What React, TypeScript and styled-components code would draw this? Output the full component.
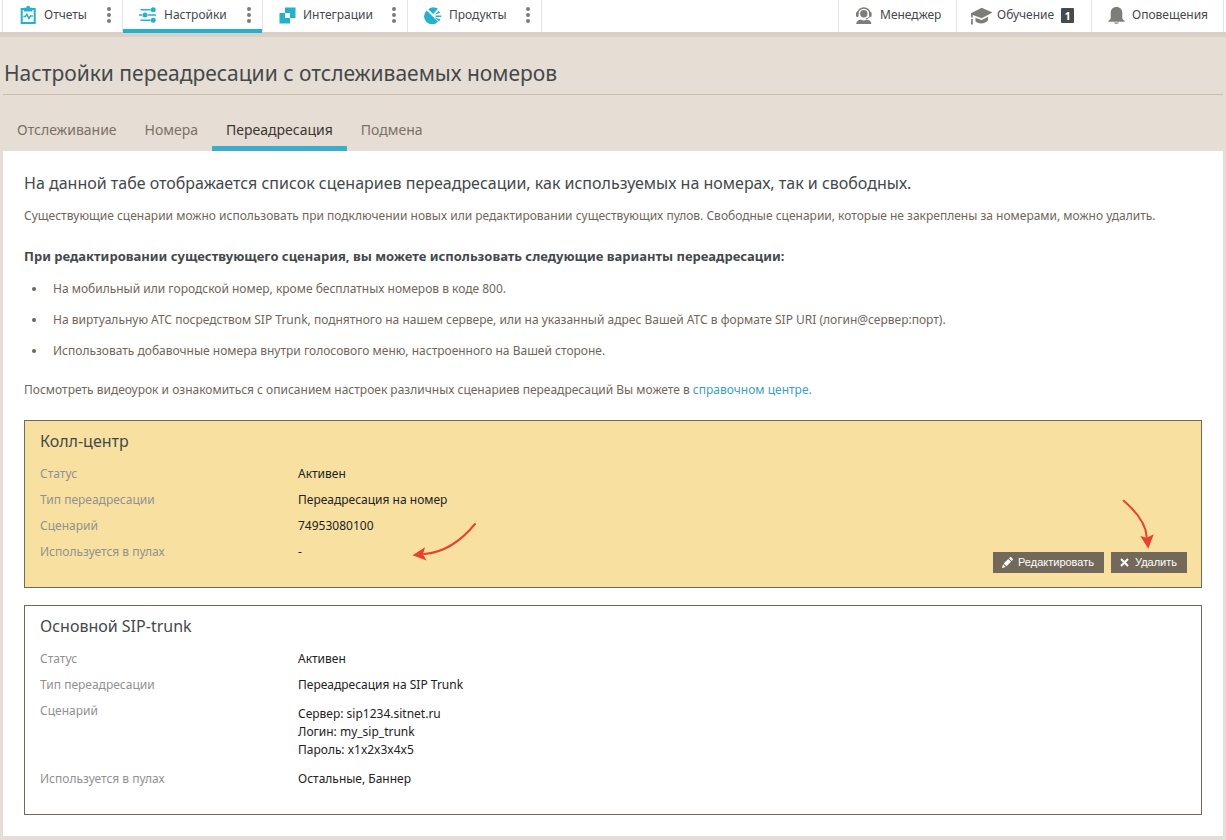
import React from 'react';
import styled, { createGlobalStyle, css } from 'styled-components';

const Global = createGlobalStyle`
  *, *::before, *::after { box-sizing: border-box; }
  body {
    margin: 0;
    background: #e6ddd4;
    color: #43494b;
    font-family: "Noto Sans", "Open Sans", sans-serif;
    font-size: 12px;
  }
  h1, h2, h3, p, ul, dl, dd { margin: 0; padding: 0; font-weight: 400; }
`;

const TopBar = styled.header`
  display: flex;
  justify-content: space-between;
  height: 37px;
  padding: 0 2px;
  background: #fff;
  border-bottom: 5px solid #d9d0c7;
`;

const NavGroup = styled.nav`
  display: flex;
  border-left: 1px solid #e4e4e4;
`;

const NavItem = styled.div<{ $width: number; $active?: boolean; $tight?: boolean }>`
  position: relative;
  display: flex;
  align-items: center;
  width: ${(p) => p.$width}px;
  height: 32px;
  padding: 0 7px 2px ${(p) => (p.$tight ? 14 : 16)}px;
  border-right: 1px solid #e4e4e4;
  ${(p) =>
    p.$active &&
    css`
      &::after {
        content: '';
        position: absolute;
        left: 0;
        right: 0;
        bottom: -1px;
        height: 4px;
        background: #23b1cd;
      }
    `}
`;

const NavLink = styled.a`
  display: flex;
  flex: 1;
  align-items: center;
  gap: 7px;
  color: #43494b;
  font-size: 12px;
  line-height: 18px;
  white-space: nowrap;
  text-decoration: none;
`;

const MenuButton = styled.button`
  width: 12px;
  height: 20px;
  padding: 0;
  border: 0;
  background: none;
  color: #7b7b79;
`;

const Badge = styled.span`
  width: 13px;
  height: 15px;
  border-radius: 1px;
  background: #434b4d;
  color: #fff;
  font-size: 11px;
  font-weight: 700;
  line-height: 15px;
  text-align: center;
`;

const Icon = styled.svg`
  display: block;
  flex: none;
  overflow: visible;
`;

const Page = styled.main`
  padding: 0 3px 4px;
`;

const PageTitle = styled.h1`
  padding: 22px 1px 7px;
  border-bottom: 1px solid #c9bda9;
  font-size: 21px;
  line-height: 28px;
`;

const Tabs = styled.nav`
  display: flex;
  padding-top: 16px;
`;

const Tab = styled.a<{ $active?: boolean }>`
  height: 40px;
  padding: 0 14px;
  border-bottom: 5px solid ${(p) => (p.$active ? '#3daccd' : 'transparent')};
  color: ${(p) => (p.$active ? '#3b3630' : '#7b7166')};
  font-size: 14px;
  line-height: 38px;
  text-decoration: none;
`;

const Panel = styled.section`
  padding: 20px 21px 21px;
  background: #fff;
`;

const Lead = styled.h2`
  font-size: 16px;
  line-height: 24px;
`;

const Text = styled.p`
  color: #706659;
  font-size: 12px;
  line-height: 20px;
`;

const Intro = styled.div`
  padding-bottom: 20px;
  ${Lead} { margin-bottom: 11px; }
`;

const SubTitle = styled.h3`
  margin: 19px 0 12px;
  font-size: 13px;
  font-weight: 700;
  line-height: 22px;
`;

const Options = styled.ul`
  display: grid;
  gap: 11px;
  margin-bottom: 19px;
  color: #706659;
  font-size: 12px;
  line-height: 20px;
  list-style: none;
`;

const Option = styled.li`
  display: flex;
  align-items: center;
  gap: 17px;
  padding-left: 8px;

  &::before {
    content: '';
    flex: none;
    width: 4px;
    height: 4px;
    border-radius: 50%;
    background: currentColor;
  }
`;

const HelpLink = styled.a`
  color: #3a9fc4;
  text-decoration: none;
`;

const Cards = styled.div`
  display: grid;
  gap: 17px;
`;

const Card = styled.article<{ $highlight?: boolean }>`
  position: relative;
  display: flex;
  padding: 10px 14px 14px 15px;
  border: 1px solid #73695b;
  background: ${(p) => (p.$highlight ? '#f8e1a0' : '#fff')};
`;

const CardBody = styled.div`
  flex: 1;
`;

const CardTitle = styled.h2`
  margin-bottom: 10px;
  font-size: 16px;
  line-height: 20px;
`;

const Details = styled.dl`
  margin-bottom: 8px;
`;

const Row = styled.div`
  display: grid;
  grid-template-columns: 258px 1fr;
  line-height: 26px;
`;

const Label = styled.dt`
  color: #919191;
`;

const Value = styled.dd<{ $multi?: boolean }>`
  color: #222;
  ${(p) =>
    p.$multi &&
    css`
      padding: 7px 0;
      line-height: 18px;
    `}
`;

const Actions = styled.div`
  display: flex;
  align-self: flex-end;
  gap: 7px;
`;

const ActionButton = styled.button`
  display: flex;
  align-items: center;
  gap: 5px;
  height: 21px;
  padding: 0 10px 0 9px;
  border: 0;
  background: #73695b;
  color: #fff;
  font-family: "Liberation Sans", sans-serif;
  font-size: 11px;
  line-height: 21px;
`;

const PointerToPools = styled.svg`
  position: absolute;
  left: 385px;
  top: 99px;
`;

const PointerToDelete = styled.svg`
  position: absolute;
  right: 44px;
  top: 75px;
`;

const DotsIcon = () => (
  <Icon width="12" height="20" viewBox="0 0 12 20" fill="currentColor">
    <circle cx="6" cy="4" r="2" />
    <circle cx="6" cy="10" r="2" />
    <circle cx="6" cy="16" r="2" />
  </Icon>
);

const ReportIcon = () => (
  <Icon width="18" height="18" viewBox="0 0 18 18" fill="none" stroke="#23b1cd">
    <path d="M2.700 3h13v14h-13z" strokeWidth="2" />
    <path d="M5 5.500V1.700h2.300a1.900 1.900 0 0 1 3.800 0h2.300v3.800z" fill="#23b1cd" stroke="none" />
    <path d="M4.400 10.500h2l1.500-2.300 2 4.200 1.500-2.400h2.400" strokeWidth="1.500" />
  </Icon>
);

const SlidersIcon = () => (
  <Icon width="18" height="18" viewBox="0 0 18 18" fill="#23b1cd">
    <path d="M1.500 3h10v1.400h-10zM0 8.300h3v1.400H0zM9 8.300h8v1.400H9zM1.500 13.600h10V15h-10z" />
    <circle cx="14.200" cy="3.700" r="2.500" />
    <circle cx="6" cy="9" r="2.500" />
    <circle cx="14.200" cy="14.300" r="2.500" />
  </Icon>
);

const IntegrationIcon = () => (
  <Icon width="17" height="18" viewBox="0 0 17 18" fill="#23b1cd">
    <path fillRule="evenodd" d="M6 1.500h10.500V12H11v5.500H.5V7H6zM6 7v5h5V7z" />
  </Icon>
);

const ProductIcon = () => (
  <Icon width="18" height="18" viewBox="0 0 18 18">
    <path d="M4.200 3.300A8 8 0 0 1 14 2.800L9.200 8z" fill="#23b1cd" />
    <path d="M2.700 4.400L14 15.700A8 8 0 1 1 2.700 4.400z" fill="#23b1cd" />
    <path d="M10.800 8.600l4-3.700a8 8 0 0 1 1.400 2zM11.600 9.400h5.500v1.600h-5.500zM10.800 11.600l5.500 1.700-1.300 2.100z" fill="#23b1cd" />
  </Icon>
);

const ManagerIcon = () => (
  <Icon width="18" height="18" viewBox="0 0 18 18" fill="#7d7e79">
    <path d="M2.500 8.200a6.300 6.300 0 0 1 12.600 0" fill="none" stroke="#7d7e79" strokeWidth="1.500" />
    <rect x="1" y="6" width="2.600" height="5" rx="1.200" />
    <rect x="14" y="6" width="2.600" height="5" rx="1.200" />
    <path d="M14.800 10.500q-1.200 2.300-4 2.300" fill="none" stroke="#7d7e79" />
    <circle cx="8.800" cy="7.800" r="3.700" />
    <path d="M1.200 18c.2-3.200 2.600-4.300 5-4.300 1.500 1 3.700 1 5.200 0 2.400 0 4.800 1.100 5 4.300z" />
  </Icon>
);

const StudyIcon = () => (
  <Icon width="19" height="18" viewBox="0 0 19 18" fill="#7d7e79">
    <path d="M0 7.300L10.700 1.800 21.500 6.500 10.700 12.300 1.800 9v2.500H.2z" />
    <path d="M4.500 11.700l6.200 2.300 6.300-3.300v3.800c-3.500 3.800-9 3.800-12.500 1z" />
    <path d="M.2 13h1.600v5.500H0z" />
  </Icon>
);

const BellIcon = () => (
  <Icon width="17" height="18" viewBox="0 0 17 18" fill="#7d7e79">
    <path d="M8.500 1c3.500 0 5.800 2.300 5.800 5.800v5c0 1.300 1 2.200 2.400 3.200v.8H.3V15c1.400-1 2.400-1.900 2.400-3.200v-5C2.700 3.300 5 1 8.500 1z" />
    <path d="M6 16.500h5c-.7 1.700-4.300 1.700-5 0z" />
  </Icon>
);

const PencilIcon = () => (
  <Icon width="11" height="11" viewBox="0 0 11 11" fill="#fff">
    <path d="M0 11l1-3.800L3.800 10zM1.700 6.500l4.600-4.600 2.800 2.800-4.600 4.600zM7 1.200L8 .3c.4-.4.9-.4 1.300 0l1.400 1.400c.4.400.4.900 0 1.300l-.9.900z" />
  </Icon>
);

const CrossIcon = () => (
  <Icon width="10" height="9" viewBox="0 0 10 9" stroke="#fff" strokeWidth="2">
    <path d="M1 1l7 7M8 1L1 8" />
  </Icon>
);

const MENU = [
  { label: 'Отчеты', width: 120, icon: <ReportIcon /> },
  { label: 'Настройки', width: 140, icon: <SlidersIcon />, active: true },
  { label: 'Интеграции', width: 145, icon: <IntegrationIcon /> },
  { label: 'Продукты', width: 134, icon: <ProductIcon /> },
];

const USER_MENU = [
  { label: 'Менеджер', width: 118, icon: <ManagerIcon /> },
  { label: 'Обучение', width: 135, icon: <StudyIcon />, badge: 1 },
  { label: 'Оповещения', width: 132, icon: <BellIcon /> },
];

const TABS = ['Отслеживание', 'Номера', 'Переадресация', 'Подмена'];

export default function App() {
  return (
    <>
      <Global />
      <TopBar>
        <NavGroup>
          {MENU.map((item) => (
            <NavItem key={item.label} $width={item.width} $active={item.active}>
              <NavLink href="#">
                {item.icon}
                {item.label}
              </NavLink>
              <MenuButton aria-label={`Меню: ${item.label}`}>
                <DotsIcon />
              </MenuButton>
            </NavItem>
          ))}
        </NavGroup>
        <NavGroup>
          {USER_MENU.map((item) => (
            <NavItem key={item.label} $width={item.width} $tight={Boolean(item.badge)}>
              <NavLink href="#">
                {item.icon}
                {item.label}
                {item.badge && <Badge>{item.badge}</Badge>}
              </NavLink>
            </NavItem>
          ))}
        </NavGroup>
      </TopBar>

      <Page>
        <PageTitle>Настройки переадресации с отслеживаемых номеров</PageTitle>
        <Tabs>
          {TABS.map((tab) => (
            <Tab key={tab} href="#" $active={tab === 'Переадресация'}>
              {tab}
            </Tab>
          ))}
        </Tabs>

        <Panel>
          <Intro>
            <Lead>
              На данной табе отображается список сценариев переадресации, как используемых на номерах, так и
              свободных.
            </Lead>
            <Text>
              Существующие сценарии можно использовать при подключении новых или редактировании существующих
              пулов. Свободные сценарии, которые не закреплены за номерами, можно удалить.
            </Text>
            <SubTitle>
              При редактировании существующего сценария, вы можете использовать следующие варианты
              переадресации:
            </SubTitle>
            <Options>
              <Option>На мобильный или городской номер, кроме бесплатных номеров в коде 800.</Option>
              <Option>
                На виртуальную АТС посредством SIP Trunk, поднятного на нашем сервере, или на указанный адрес
                Вашей АТС в формате SIP URI (логин@сервер:порт).
              </Option>
              <Option>
                Использовать добавочные номера внутри голосового меню, настроенного на Вашей стороне.
              </Option>
            </Options>
            <Text>
              Посмотреть видеоурок и ознакомиться с описанием настроек различных сценариев переадресаций Вы
              можете в <HelpLink href="#">справочном центре.</HelpLink>
            </Text>
          </Intro>

          <Cards>
            <Card $highlight>
              <CardBody>
                <CardTitle>Колл-центр</CardTitle>
                <Details>
                  <Row>
                    <Label>Статус</Label>
                    <Value>Активен</Value>
                  </Row>
                  <Row>
                    <Label>Тип переадресации</Label>
                    <Value>Переадресация на номер</Value>
                  </Row>
                  <Row>
                    <Label>Сценарий</Label>
                    <Value>74953080100</Value>
                  </Row>
                  <Row>
                    <Label>Используется в пулах</Label>
                    <Value>-</Value>
                  </Row>
                </Details>
              </CardBody>
              <Actions>
                <ActionButton>
                  <PencilIcon />
                  Редактировать
                </ActionButton>
                <ActionButton>
                  <CrossIcon />
                  Удалить
                </ActionButton>
              </Actions>
              <PointerToPools width="70" height="45" viewBox="0 0 70 45">
                <path d="M65 4Q42 32 14 34" fill="none" stroke="#e8412f" strokeWidth="2" strokeLinecap="round" />
                <path d="M2.500 35.300L15 27.300l-2 7 3.500 6.300z" fill="#e8412f" />
              </PointerToPools>
              <PointerToDelete width="40" height="60" viewBox="0 0 40 60">
                <path d="M6.700 4.700Q29 24 29.700 41" fill="none" stroke="#e8412f" strokeWidth="2" strokeLinecap="round" />
                <path d="M31.300 52.700L23.300 40l6.400 1.700 7-3.400z" fill="#e8412f" />
              </PointerToDelete>
            </Card>

            <Card>
              <CardBody>
                <CardTitle>Основной SIP-trunk</CardTitle>
                <Details>
                  <Row>
                    <Label>Статус</Label>
                    <Value>Активен</Value>
                  </Row>
                  <Row>
                    <Label>Тип переадресации</Label>
                    <Value>Переадресация на SIP Trunk</Value>
                  </Row>
                  <Row>
                    <Label>Сценарий</Label>
                    <Value $multi>
                      Сервер: sip1234.sitnet.ru
                      <br />
                      Логин: my_sip_trunk
                      <br />
                      Пароль: x1x2x3x4x5
                    </Value>
                  </Row>
                  <Row>
                    <Label>Используется в пулах</Label>
                    <Value>Остальные, Баннер</Value>
                  </Row>
                </Details>
              </CardBody>
            </Card>
          </Cards>
        </Panel>
      </Page>
    </>
  );
}
